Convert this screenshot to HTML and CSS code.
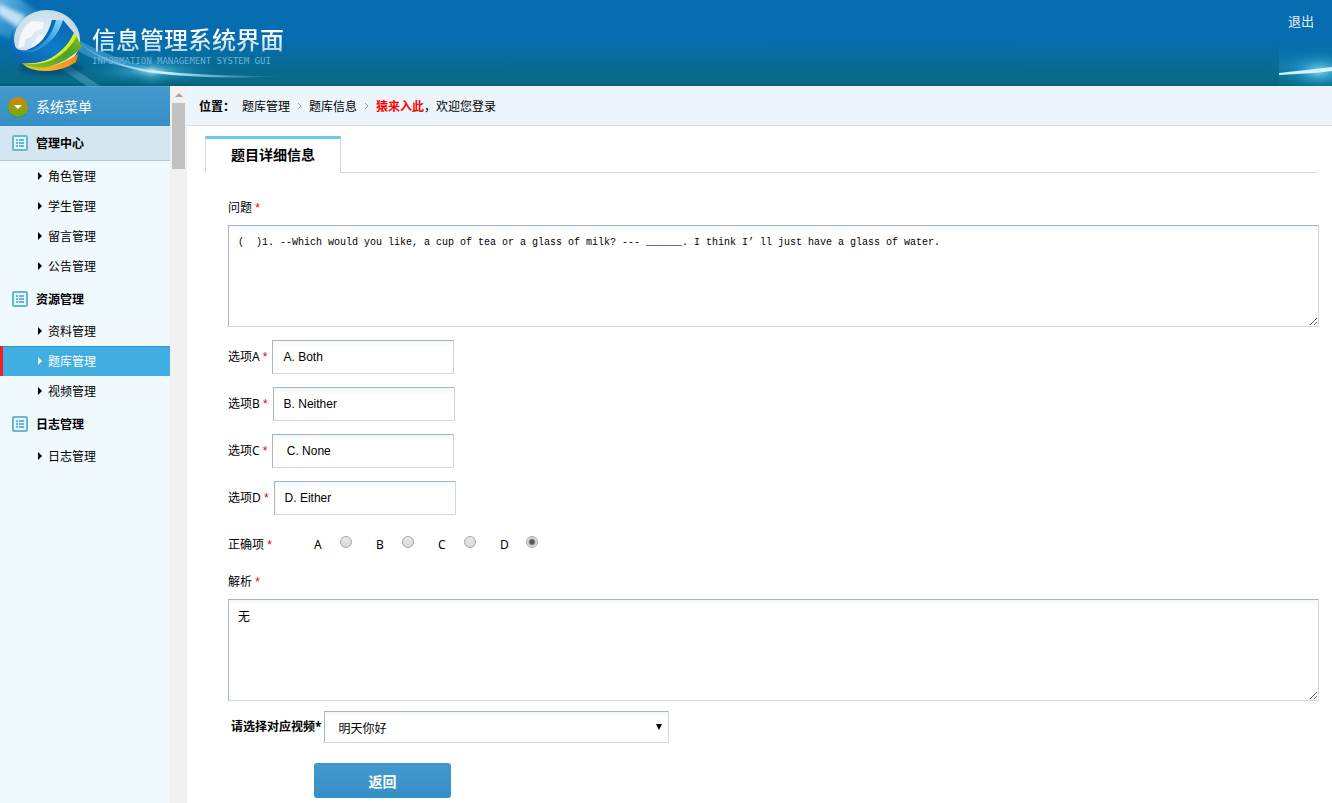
FILE: index.html
```html
<!DOCTYPE html>
<html lang="zh-CN">
<head>
<meta charset="utf-8">
<title>信息管理系统界面</title>
<link rel="stylesheet" href="styles.css">
</head>
<body>
<svg class="defs" width="0" height="0" aria-hidden="true">
  <symbol id="list" viewBox="0 0 16 16">
    <rect x="1" y="1" width="14" height="14" rx="1" fill="#e8f5fb" stroke="#68b6d8" stroke-width="2"/>
    <path d="M4 5h2M7 5h5M4 8h2M7 8h5M4 11h2M7 11h5" stroke="#68b6d8" stroke-width="2"/>
  </symbol>
</svg>
<header class="header">
  <svg class="header-art" width="300" height="86" viewBox="0 0 300 86" aria-hidden="true">
    <defs>
      <linearGradient id="beam" x1="0" y1="0" x2="1" y2="1">
        <stop offset="0" stop-color="#8fd0f4" stop-opacity=".8"/><stop offset=".5" stop-color="#4fb0e4" stop-opacity=".5"/><stop offset="1" stop-color="#5cb8d4" stop-opacity=".35"/>
      </linearGradient>
      <linearGradient id="tail" x1="0" y1="0" x2="1" y2="0">
        <stop offset="0" stop-color="#7cc8ee" stop-opacity=".4"/><stop offset=".4" stop-color="#d8f4ff"/><stop offset="1" stop-color="#5cc0dc" stop-opacity="0"/>
      </linearGradient>
      <radialGradient id="spark"><stop offset="0" stop-color="#c4f0fa" stop-opacity=".9"/><stop offset=".35" stop-color="#4ab4d8" stop-opacity=".5"/><stop offset="1" stop-color="#1684b8" stop-opacity="0"/></radialGradient>
      <radialGradient id="ball" cx=".45" cy=".45" r=".58"><stop offset="0" stop-color="#e4eef4"/><stop offset=".6" stop-color="#d2e2ec"/><stop offset=".88" stop-color="#c2d8e4"/><stop offset="1" stop-color="#f6fafc"/></radialGradient>
      <linearGradient id="blue" x1="0" y1="1" x2="1" y2="0"><stop offset="0" stop-color="#0a5ca4"/><stop offset=".5" stop-color="#0e7cc8"/><stop offset="1" stop-color="#0a62ae"/></linearGradient>
      <linearGradient id="cyan" x1="0" y1="1" x2="1" y2="0"><stop offset="0" stop-color="#1478be"/><stop offset=".5" stop-color="#2a98d8"/><stop offset="1" stop-color="#7fdcf8"/></linearGradient>
      <linearGradient id="green" x1="0" y1="1" x2="1" y2="0"><stop offset="0" stop-color="#8cc820"/><stop offset=".6" stop-color="#4ca024"/><stop offset="1" stop-color="#7cc41c"/></linearGradient>
      <linearGradient id="orange" x1="0" y1="1" x2="1" y2="0"><stop offset="0" stop-color="#fcc02c"/><stop offset="1" stop-color="#f0820c"/></linearGradient>
      <filter id="soft" x="-20%" y="-20%" width="140%" height="140%"><feGaussianBlur stdDeviation="2"/></filter>
      <filter id="soft1" x="-20%" y="-20%" width="140%" height="140%"><feGaussianBlur stdDeviation=".7"/></filter>
    </defs>
    <path d="M-4 -4L16 -4L44 18L16 40L-4 34Z" fill="url(#beam)" filter="url(#soft)"/>
    <path d="M-2 3L26 16L18 28L-2 14Z" fill="#e4f5fd" opacity=".8" filter="url(#soft)"/>
    <path d="M58 64L96 90M66 66L106 92" stroke="#68b4d0" stroke-width="4" opacity=".4" filter="url(#soft1)"/>
    <path d="M76 38Q104 56 158 70L120 66Q90 60 74 48Z" fill="#4aa4d8" opacity=".6" filter="url(#soft1)"/>
    <ellipse cx="152" cy="71" rx="66" ry="13" fill="url(#spark)"/>
    <ellipse cx="152" cy="71" rx="20" ry="20" fill="url(#spark)" opacity=".5"/>
    <path d="M78 42Q110 66 158 71Q215 77 288 76Q210 80 154 73Q104 66 78 42Z" fill="url(#tail)"/>
    <ellipse cx="51" cy="68" rx="32" ry="7" fill="#043c68" opacity=".5" filter="url(#soft)"/>
    <ellipse cx="47" cy="40" rx="33" ry="30" fill="url(#ball)"/>
    <path d="M20 37Q24 25 32 21L44 22L42 29L35 31L31 37L26 39L24 46L18 48Z" fill="#fff" opacity=".75"/>
    <path d="M32 44L40 34L46 34L42 42L34 48Z" fill="#fff" opacity=".5"/>
    <path d="M52 20L63 20Q54 44 34 51L22 54L15 48Q20 51 27 50Q46 44 52 20Z" fill="url(#cyan)"/>
    <path d="M52 20L56 20Q50 42 32 50L27 50Q46 44 52 20Z" fill="#0c68b4"/>
    <path d="M13 30Q8 40 10 48Q12 58 22 63Q40 66 56 55Q70 46 74 33L63 20Q56 42 34 51Q22 54 16 48Q12 40 13 30Z" fill="url(#blue)"/>
    <path d="M76 35Q68 50 56 57Q42 66 22 63Q31 70 45 68Q68 62 82 47Z" fill="url(#green)"/>
    <path d="M74 33L77 36Q68 52 54 59Q42 66 22 63Q44 65 56 55Q68 46 74 33Z" fill="#d8ec24"/>
    <path d="M22 63Q30 72 49 71Q64 70 76 62L78 54Q64 64 48 67Q32 69 22 63Z" fill="url(#orange)"/>
  </svg>
  <svg class="header-flare" width="53" height="50" viewBox="0 0 53 50" aria-hidden="true">
    <defs>
      <radialGradient id="flare"><stop offset="0" stop-color="#8be0f6" stop-opacity=".9"/><stop offset=".4" stop-color="#38a4d0" stop-opacity=".65"/><stop offset="1" stop-color="#0870b0" stop-opacity="0"/></radialGradient>
      <linearGradient id="flarebase" x1="0" y1="0" x2="0" y2="1"><stop offset="0" stop-color="#0870b0" stop-opacity="0"/><stop offset=".6" stop-color="#1688bc" stop-opacity=".7"/><stop offset="1" stop-color="#087088" stop-opacity=".6"/></linearGradient>
    </defs>
    <rect width="53" height="50" fill="url(#flarebase)"/>
    <ellipse cx="40" cy="35" rx="40" ry="22" fill="url(#flare)"/>
    <path d="M0 37L36 33L53 31V35L36 37L0 39Z" fill="#d4f2fa"/>
  </svg>
  <div class="brand">
    <div class="brand-name">信息管理系统界面</div>
    <div class="brand-sub">INFORMATION MANAGEMENT SYSTEM GUI</div>
  </div>
  <a class="logout" href="#">退出</a>
</header>
<div class="layout">
  <nav class="sidebar">
    <div class="side-title">
      <svg width="22" height="22" viewBox="0 0 22 22" aria-hidden="true">
        <defs><linearGradient id="og" x1="0" y1="0" x2="0" y2="1"><stop offset="0" stop-color="#d8820c"/><stop offset="1" stop-color="#68b010"/></linearGradient></defs>
        <circle cx="11" cy="11.500" r="10" fill="#2c78a4"/><circle cx="11" cy="11" r="10" fill="url(#og)"/><path d="M7 9h8l-4 4z" fill="#fff"/>
      </svg>
      <span>系统菜单</span>
    </div>
    <div class="group group-open"><svg width="16" height="16" aria-hidden="true"><use href="#list"/></svg>管理中心</div>
    <ul class="items">
      <li><a href="#">角色管理</a></li>
      <li><a href="#">学生管理</a></li>
      <li><a href="#">留言管理</a></li>
      <li><a href="#">公告管理</a></li>
    </ul>
    <div class="group"><svg width="16" height="16" aria-hidden="true"><use href="#list"/></svg>资源管理</div>
    <ul class="items">
      <li><a href="#">资料管理</a></li>
      <li><a class="active" href="#">题库管理</a></li>
      <li><a href="#">视频管理</a></li>
    </ul>
    <div class="group"><svg width="16" height="16" aria-hidden="true"><use href="#list"/></svg>日志管理</div>
    <ul class="items">
      <li><a href="#">日志管理</a></li>
    </ul>
  </nav>
  <div class="scroll" aria-hidden="true"><i class="scroll-up"></i><i class="scroll-thumb"></i></div>
  <main class="main">
    <div class="crumbs">
      <b>位置<span class="colon">：</span></b>
      <a href="#">题库管理</a>
      <svg width="5" height="8" viewBox="0 0 5 8" aria-hidden="true"><path d="M1 1l3 3-3 3" fill="none" stroke="#8aa8b8"/></svg>
      <a href="#">题库信息</a>
      <svg width="5" height="8" viewBox="0 0 5 8" aria-hidden="true"><path d="M1 1l3 3-3 3" fill="none" stroke="#8aa8b8"/></svg>
      <span><b class="site">猿来入此</b>，欢迎您登录</span>
    </div>
    <div class="tabs"><a class="tab" href="#">题目详细信息</a></div>
    <form class="form">
      <label class="block-label" for="question">问题 <em>*</em></label>
      <textarea id="question" class="box">(  )1. --Which would you like, a cup of tea or a glass of milk? --- ______. I think I’ ll just have a glass of water.</textarea>
      <div class="options">
        <div class="row"><label for="oa">选项A <em>*</em></label><input id="oa" class="text" type="text" value="A. Both"></div>
        <div class="row"><label for="ob">选项B <em>*</em></label><input id="ob" class="text" type="text" value="B. Neither"></div>
        <div class="row"><label for="oc">选项C <em>*</em></label><input id="oc" class="text" type="text" value=" C. None"></div>
        <div class="row"><label for="od">选项D <em>*</em></label><input id="od" class="text" type="text" value="D. Either"></div>
        <div class="row answer" role="radiogroup" aria-labelledby="answer-label">
          <span id="answer-label" class="answer-label">正确项 <em>*</em></span>
          <label class="choice"><span>A</span><input type="radio" name="answer"></label>
          <label class="choice"><span>B</span><input type="radio" name="answer"></label>
          <label class="choice"><span>C</span><input type="radio" name="answer"></label>
          <label class="choice"><span>D</span><input type="radio" name="answer" checked></label>
        </div>
      </div>
      <label class="block-label" for="analysis">解析 <em>*</em></label>
      <textarea id="analysis" class="box box-cjk">无</textarea>
      <div class="row video">
        <label for="video">请选择对应视频*</label>
        <div class="select"><select id="video"><option>明天你好</option></select><svg width="6" height="6" viewBox="0 0 6 6" aria-hidden="true"><path d="M0 0h6L3 6z"/></svg></div>
      </div>
      <button class="back" type="button">返回</button>
    </form>
  </main>
</div>
</body>
</html>
```
FILE: styles.css
```css
* { box-sizing: border-box; }
body {
  margin: 0;
  min-height: 100vh;
  display: flex;
  flex-direction: column;
  background: #fff;
  color: #000;
  font: 12px/20px "Noto Sans", "Noto Sans CJK SC", sans-serif;
}
a { color: inherit; text-decoration: none; }
.defs { position: absolute; }

.header {
  position: relative;
  display: flex;
  justify-content: space-between;
  align-items: flex-start;
  height: 86px;
  padding: 0 18px 0 92px;
  background: linear-gradient(#066bb0, #066db0 45%, #086a84 96%, #075c72);
}
.header-art { position: absolute; left: 0; top: 0; }
.header-flare { position: absolute; right: 0; bottom: 0; }
.brand { position: relative; padding-top: 24px; }
.brand-name {
  font-size: 24px;
  line-height: 32px;
  font-weight: 500;
  background: linear-gradient(#fff 35%, #a9cfe0 90%);
  -webkit-background-clip: text;
  background-clip: text;
  color: transparent;
}
.brand-sub {
  font: 9px/10px "DejaVu Sans Mono", monospace;
  color: #6db4d8;
}
.logout {
  position: relative;
  padding-top: 11px;
  font-size: 13px;
  color: #e9f2f7;
}

.layout { flex: 1; display: flex; }
.sidebar {
  width: 170px;
  flex: none;
  background: #f0f9fe;
  font-family: "Noto Sans CJK SC", sans-serif;
}
.side-title {
  display: flex;
  align-items: center;
  gap: 7px;
  height: 40px;
  padding-left: 7px;
  border-top: 1px solid #54a8d4;
  background: linear-gradient(#4499cc, #348fc6);
  color: #fff;
  font: 14px/20px "Noto Sans", "Noto Sans CJK SC", sans-serif;
}
.group {
  display: flex;
  align-items: center;
  gap: 8px;
  height: 35px;
  padding-left: 12px;
  font-weight: bold;
}
.group-open { background: #d4e6ef; border-bottom: 1px solid #b5cbd6; }
.items { margin: 0; padding: 0; list-style: none; }
.items a {
  display: flex;
  align-items: center;
  gap: 6px;
  height: 30px;
  padding-left: 38px;
}
.items a::before {
  content: "";
  border: 4px solid transparent;
  border-left-color: currentColor;
  border-right: 0;
}
.items .active {
  padding-left: 35px;
  border-left: 3px solid #ee2222;
  background: #40aee0;
  box-shadow: inset 0 1px #3595c8;
  color: #fff;
}
.scroll {
  width: 17px;
  flex: none;
  display: flex;
  flex-direction: column;
  align-items: center;
  gap: 6px;
  padding-top: 7px;
  background: #f1f1f1;
}
.scroll-up { border: 4px solid transparent; border-top: 0; border-bottom-color: #a3a3a3; }
.scroll-thumb { width: 13px; height: 66px; background: #c1c1c1; }

.main { flex: 1; min-width: 0; }
.crumbs {
  display: flex;
  align-items: center;
  gap: 7px;
  height: 40px;
  padding-left: 12px;
  border-bottom: 1px solid #d7e2e8;
  background: #ebf5fb;
  font-family: "Noto Sans CJK SC", sans-serif;
}
.colon { font-family: "Noto Sans CJK TC", sans-serif; }
.tabs {
  display: flex;
  margin: 10px 15px 0 18px;
  border-bottom: 1px solid #d3dbde;
}
.tab {
  height: 37px;
  margin-bottom: -1px;
  padding: 6px 25px 0;
  border: 1px solid #d3dbde;
  border-top: 3px solid #66c9f3;
  border-bottom: 0;
  background: #fff;
  font-size: 14px;
  font-weight: bold;
}
.site { color: #f00; }

.form {
  display: flex;
  flex-direction: column;
  padding: 18px 13px 5px 41px;
}
em { color: #e00; font: 12px "Liberation Sans", sans-serif; }
.block-label { line-height: 34px; }
.box, .text, .select select {
  margin: 0;
  border: 1px solid #ced9df;
  border-color: #a7b5bc #ced9df #ced9df #a7b5bc;
  border-radius: 0;
  outline: 0;
  background: linear-gradient(#f3f6f8, #fff 6px);
  color: #000;
}
.box {
  width: 100%;
  height: 102px;
  padding: 7px 9px;
  font: 10px/20px "Liberation Mono", monospace;
}
.box-cjk { font: 12px/20px "Noto Sans", "Noto Sans CJK SC", sans-serif; }
.options {
  display: flex;
  flex-direction: column;
  gap: 13px;
  padding: 13px 0 3px;
}
.row { display: flex; align-items: center; gap: 5px; }
.text {
  width: 182px;
  height: 34px;
  padding: 0 10px;
  font: 12px "Liberation Sans", sans-serif;
}
.answer { height: 34px; gap: 0; }
.answer-label { width: 86px; }
.choice { display: flex; width: 62px; }
.choice span { width: 26px; }
.choice input {
  appearance: none;
  width: 12px;
  height: 12px;
  margin: 1px 0 0;
  border: 1px solid #a6a6a6;
  border-radius: 50%;
  background: linear-gradient(#e8e8e8, #d8d8d8);
}
.choice input:checked { background: radial-gradient(circle, #555 2px, #e0e0e0 4px); }
.video { padding: 10px 0 0 3px; gap: 2px; }
.video label { font-weight: bold; }
.select { position: relative; width: 345px; }
.select select {
  appearance: none;
  display: block;
  width: 100%;
  height: 32px;
  padding: 0 14px;
  font: 12px "Noto Sans CJK SC", sans-serif;
}
.select svg { position: absolute; right: 7px; top: 13px; pointer-events: none; }
.back {
  width: 137px;
  height: 35px;
  margin: 20px 0 0 86px;
  border: 0;
  border-radius: 3px;
  background: linear-gradient(#4499cc, #348fc6);
  color: #fff;
  font: bold 14px "Noto Sans", "Noto Sans CJK SC", sans-serif;
}
```
